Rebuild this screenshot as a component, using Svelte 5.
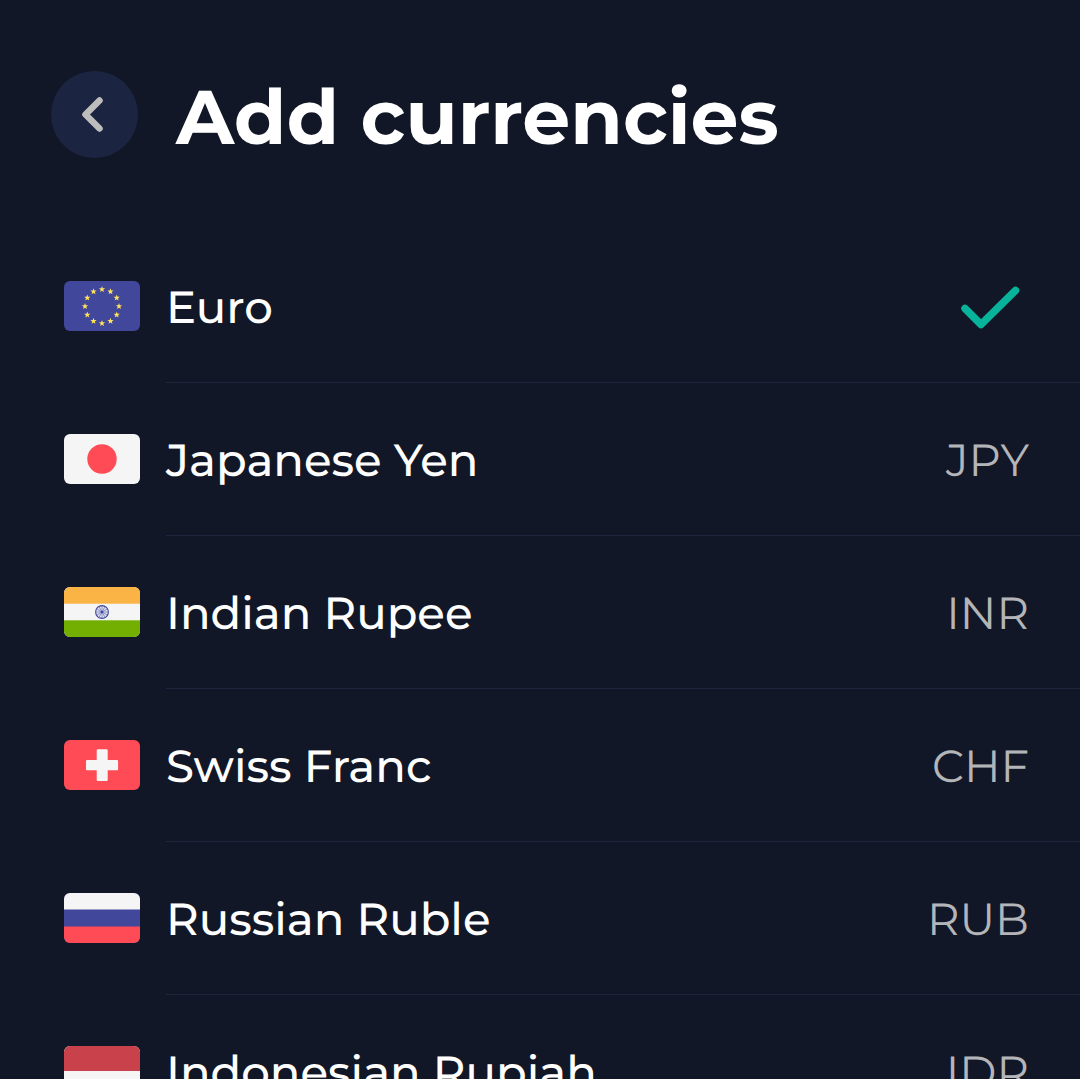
<script>
  let currencies = $state([
    { code: 'EUR', name: 'Euro', selected: true },
    { code: 'JPY', name: 'Japanese Yen', selected: false },
    { code: 'INR', name: 'Indian Rupee', selected: false },
    { code: 'CHF', name: 'Swiss Franc', selected: false },
    { code: 'RUB', name: 'Russian Ruble', selected: false },
    { code: 'IDR', name: 'Indonesian Rupiah', selected: false }
  ]);

  const angles = Array.from({ length: 12 }, (_, i) => i * 30);

  function starPoints(angle) {
    const a = (angle * Math.PI) / 180;
    const cx = 38 + 17 * Math.sin(a);
    const cy = 25.3 - 17 * Math.cos(a);
    return Array.from({ length: 10 }, (_, k) => {
      const r = k % 2 ? 1.4 : 3.3;
      const t = (k * Math.PI) / 5;
      return `${(cx + r * Math.sin(t)).toFixed(2)},${(cy - r * Math.cos(t)).toFixed(2)}`;
    }).join(' ');
  }
</script>

{#snippet flag(code)}
  <svg class="flag" viewBox="0 0 76 50" aria-hidden="true">
    {#if code === 'EUR'}
      <rect width="76" height="50" fill="#41479b" />
      {#each angles as angle}
        <polygon points={starPoints(angle)} fill="#ffe15a" />
      {/each}
    {:else if code === 'JPY'}
      <rect width="76" height="50" fill="#f5f5f5" />
      <circle cx="38" cy="25" r="14.7" fill="#ff4b55" />
    {:else if code === 'INR'}
      <rect width="76" height="50" fill="#f5f5f5" />
      <rect width="76" height="16.7" fill="#fab446" />
      <rect y="33.3" width="76" height="16.7" fill="#73af00" />
      <circle cx="38" cy="25" r="6.4" fill="#dcdeed" stroke="#41479b" stroke-width="1.1" />
      {#each angles as angle}
        <line x1="38" y1="25" x2="38" y2="19" stroke="#41479b" stroke-width="0.45" transform="rotate({angle} 38 25)" />
      {/each}
      <circle cx="38" cy="25" r="1.3" fill="#41479b" />
    {:else if code === 'CHF'}
      <rect width="76" height="50" fill="#ff4b55" />
      <path d="M33.7 9.2h9q1 0 1 1v9.7h9.4q1 0 1 1v8.4q0 1-1 1h-9.4v9.8q0 1-1 1h-9q-1 0-1-1v-9.8H23q-1 0-1-1v-8.4q0-1 1-1h9.7v-9.7q0-1 1-1z" fill="#f5f5f5" />
    {:else if code === 'RUB'}
      <rect width="76" height="50" fill="#41479b" />
      <rect width="76" height="16.5" fill="#f5f5f5" />
      <rect y="33.5" width="76" height="16.5" fill="#ff4b55" />
    {:else}
      <rect width="76" height="50" fill="#f5f5f5" />
      <rect width="76" height="25" fill="#c8414b" />
    {/if}
  </svg>
{/snippet}

<main>
  <header>
    <button class="back" type="button" aria-label="Back">
      <svg viewBox="0 0 87 87" aria-hidden="true">
        <path d="M48.5 29.5 34.5 43.5 48.5 57.5" />
      </svg>
    </button>
    <h1>Add currencies</h1>
  </header>

  <ul>
    {#each currencies as currency (currency.code)}
      <li>
        <button
          class="row"
          type="button"
          aria-pressed={currency.selected}
          onclick={() => (currency.selected = !currency.selected)}
        >
          {@render flag(currency.code)}
          <span class="details">
            <span class="name">{currency.name}</span>
            {#if currency.selected}
              <svg class="check" viewBox="0 0 60 44" aria-hidden="true">
                <path d="M5 22.5 21 38.5 55.5 4.5" />
              </svg>
            {:else}
              <span class="code">{currency.code}</span>
            {/if}
          </span>
        </button>
      </li>
    {/each}
  </ul>
</main>

<style>
  :global(body) {
    margin: 0;
    background: #111726;
  }

  main {
    box-sizing: border-box;
    height: 100vh;
    overflow: auto;
    scrollbar-width: none;
    background: #111726;
    color: #fff;
    font-family: Montserrat, Inter, sans-serif;
    text-rendering: geometricPrecision;
  }

  button {
    margin: 0;
    padding: 0;
    border: 0;
    background: none;
    color: inherit;
    font: inherit;
    text-align: left;
    text-rendering: inherit;
    cursor: pointer;
  }

  header {
    display: flex;
    align-items: center;
    gap: 38px;
    padding: 71px 51px 72px;
  }

  .back {
    flex: none;
    width: 87px;
    height: 87px;
    border-radius: 50%;
    background: #1b2541;
  }

  .back svg {
    display: block;
  }

  .back path {
    fill: none;
    stroke: #bdbdbd;
    stroke-width: 6.5;
    stroke-linecap: round;
    stroke-linejoin: round;
  }

  h1 {
    margin: 0;
    padding-top: 6px;
    font-size: 76px;
    line-height: 81px;
    font-weight: 700;
    white-space: nowrap;
  }

  ul {
    margin: 0;
    padding: 0;
    list-style: none;
  }

  .row {
    display: flex;
    align-items: center;
    gap: 26px;
    width: 100%;
    padding-left: 64px;
  }

  .flag {
    flex: none;
    width: 76px;
    height: 50px;
    margin-bottom: 2px;
    border-radius: 6px;
  }

  .details {
    box-sizing: border-box;
    flex: 1;
    display: flex;
    align-items: center;
    justify-content: space-between;
    height: 153px;
    padding: 4px 51px 0 0;
    border-bottom: 1px solid #1e253d;
    font-size: 45px;
    line-height: 56px;
  }

  .name {
    font-weight: 500;
  }

  .code {
    color: #b4b5b8;
    font-weight: 400;
  }

  .check {
    width: 60px;
    height: 44px;
    margin-right: 9px;
  }

  .check path {
    fill: none;
    stroke: #08b39b;
    stroke-width: 7.5;
    stroke-linecap: round;
    stroke-linejoin: round;
  }
</style>
